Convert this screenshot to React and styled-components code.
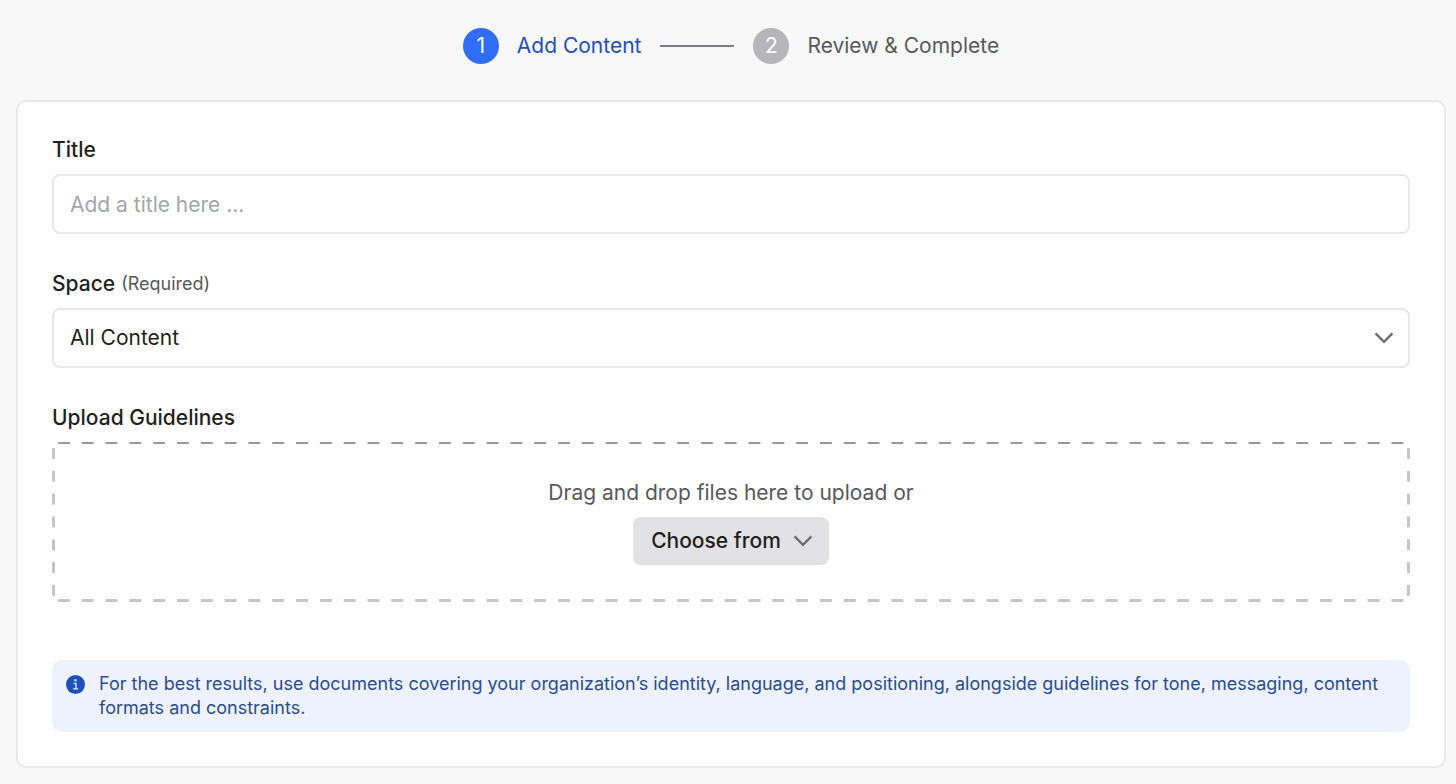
import { Fragment } from "react";
import styled, { createGlobalStyle } from "styled-components";

const COLOR = {
  page: "#f8f8f8",
  border: "#e8e8e8",
  text: "#1f1f22",
  subText: "#58585c",
  icon: "#6d6d73",
  blue: "#326dfa",
  darkBlue: "#1f4fb8",
};

const GlobalStyle = createGlobalStyle`
  * {
    box-sizing: border-box;
  }
  body {
    margin: 0;
    background: ${COLOR.page};
    color: ${COLOR.text};
    font-family: Inter, "Liberation Sans", sans-serif;
    font-size: 21px;
    line-height: 28px;
  }
`;

const Page = styled.main`
  padding: 28px 10px 16px 16px;
`;

// stepper
const Steps = styled.ol`
  display: flex;
  align-items: center;
  justify-content: center;
  gap: 19px;
  margin: 0 0 36px;
  padding: 0;
  list-style: none;
`;

const Step = styled.li`
  display: flex;
  align-items: center;
  gap: 18px;
  color: ${(props) => (props.$active ? COLOR.darkBlue : COLOR.subText)};
`;

const StepNumber = styled.span`
  display: flex;
  align-items: center;
  justify-content: center;
  width: 36px;
  height: 36px;
  border-radius: 50%;
  background: ${(props) => (props.$active ? COLOR.blue : "#b6b6b8")};
  color: #ffffff;
`;

const StepLine = styled.li`
  width: 74px;
  height: 2px;
  background: #7c7c82;
`;

// form
const Card = styled.form`
  display: flex;
  flex-direction: column;
  gap: 36px;
  padding: 34px;
  border: 2px solid ${COLOR.border};
  border-radius: 10px;
  background: #ffffff;
`;

const Field = styled.div`
  display: flex;
  flex-direction: column;
  gap: 10px;
`;

const Label = styled.label`
  display: flex;
  align-items: center;
  gap: 6px;
  font-weight: 500;
`;

const Required = styled.span`
  color: ${COLOR.subText};
  font-size: 18px;
  font-weight: 400;
`;

const TextInput = styled.input`
  width: 100%;
  height: 60px;
  padding: 0 16px;
  border: 2px solid ${COLOR.border};
  border-radius: 8px;
  background: #ffffff;
  color: ${COLOR.text};
  font: inherit;

  &::placeholder {
    color: #a5a5a9;
  }
`;

const SelectWrap = styled.div`
  position: relative;
`;

const Select = styled.select`
  display: block;
  appearance: none;
  width: 100%;
  height: 60px;
  padding: 0 52px 0 16px;
  border: 2px solid ${COLOR.border};
  border-radius: 8px;
  background: #ffffff;
  color: ${COLOR.text};
  font: inherit;
`;

const SelectIcon = styled.span`
  position: absolute;
  top: 0;
  right: 16px;
  bottom: 0;
  display: flex;
  align-items: center;
  pointer-events: none;
`;

const dash = (direction, color) =>
  `linear-gradient(${direction}, transparent 24%, ${color} 24%, ${color} 76%, transparent 76%)`;

// dashes are spread evenly over each side
const DropZone = styled.div`
  display: flex;
  flex-direction: column;
  align-items: center;
  gap: 10px;
  padding: 37px 20px;
  border-radius: 8px;
  background-image:
    ${dash("to right", "#98989d")},
    ${dash("to right", "#c6c6ca")},
    ${dash("to bottom", "#c6c6ca")},
    ${dash("to bottom", "#c6c6ca")};
  background-position: left top, left bottom, left top, right top;
  background-repeat: round no-repeat, round no-repeat, no-repeat round, no-repeat round;
  background-size: 24px 2px, 24px 3px, 3px 24px, 3px 24px;
`;

const DropText = styled.span`
  color: ${COLOR.subText};
`;

const ChooseButton = styled.button`
  display: flex;
  align-items: center;
  gap: 12px;
  height: 48px;
  padding: 0 16px 0 18px;
  border: 0;
  border-radius: 8px;
  background: #e2e2e4;
  color: ${COLOR.text};
  font: inherit;
  font-weight: 500;
`;

const Notice = styled.div`
  display: flex;
  gap: 14px;
  margin-top: 22px;
  padding: 12px 14px;
  border-radius: 10px;
  background: #edf2fe;
  color: #2b4d8c;
  font-size: 18px;
  line-height: 24px;
`;

const NoticeText = styled.p`
  margin: 0;
`;

const InfoSvg = styled.svg`
  flex: none;
  margin-top: 3px;
`;

function Chevron() {
  return (
    <svg width="20" height="14" viewBox="0 0 20 14" fill="none" aria-hidden="true">
      <path d="M1.6 2.4L10 10.8L18.4 2.4" stroke={COLOR.icon} strokeWidth="2.4" />
    </svg>
  );
}

function InfoIcon() {
  return (
    <InfoSvg width="19" height="19" viewBox="0 0 19 19" aria-hidden="true">
      <circle cx="9.5" cy="9.5" r="9.5" fill={COLOR.darkBlue} />
      <circle cx="9.5" cy="5.2" r="1.3" fill="#c9d8f7" />
      <path d="M7.5 8.4H10V13.6M7.3 13.8H12" fill="none" stroke="#c9d8f7" strokeWidth="1.5" />
    </InfoSvg>
  );
}

const steps = ["Add Content", "Review & Complete"];

function App() {
  return (
    <Fragment>
      <GlobalStyle />
      <Page>
        <Steps>
          {steps.map((name, index) => (
            <Fragment key={name}>
              {index > 0 && <StepLine aria-hidden="true" />}
              <Step $active={index === 0}>
                <StepNumber $active={index === 0}>{index + 1}</StepNumber>
                {name}
              </Step>
            </Fragment>
          ))}
        </Steps>

        <Card>
          <Field>
            <Label htmlFor="title">Title</Label>
            <TextInput id="title" type="text" placeholder="Add a title here ..." />
          </Field>

          <Field>
            <Label htmlFor="space">
              Space <Required>(Required)</Required>
            </Label>
            <SelectWrap>
              <Select id="space" defaultValue="all">
                <option value="all">All Content</option>
              </Select>
              <SelectIcon>
                <Chevron />
              </SelectIcon>
            </SelectWrap>
          </Field>

          <Field>
            <Label htmlFor="choose">Upload Guidelines</Label>
            <DropZone>
              <DropText>Drag and drop files here to upload or</DropText>
              <ChooseButton id="choose" type="button">
                Choose from
                <Chevron />
              </ChooseButton>
            </DropZone>
          </Field>

          <Notice>
            <InfoIcon />
            <NoticeText>
              For the best results, use documents covering your organization’s identity, language, and positioning,
              alongside guidelines for tone, messaging, content formats and constraints.
            </NoticeText>
          </Notice>
        </Card>
      </Page>
    </Fragment>
  );
}

export default App;
